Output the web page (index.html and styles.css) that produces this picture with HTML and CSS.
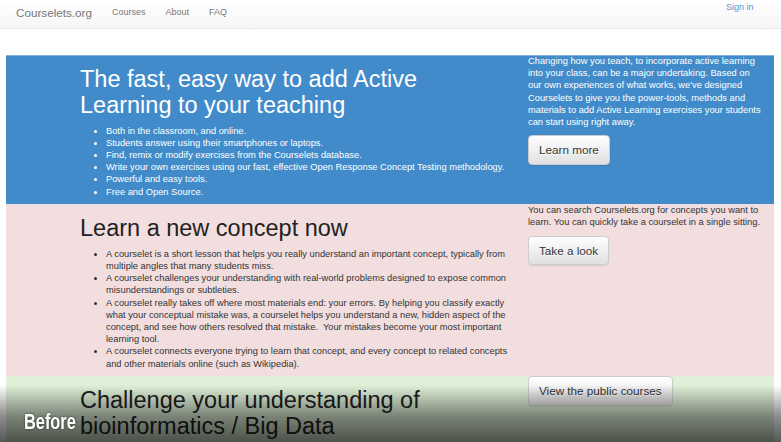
FILE: index.html
```html
<!DOCTYPE html>
<html lang="en">
<head>
<meta charset="utf-8">
<title>Courselets.org</title>
<link rel="stylesheet" href="styles.css">
</head>
<body>
<header class="navbar">
  <a class="brand" href="#">Courselets.org</a>
  <nav class="nav-links">
    <a href="#">Courses</a>
    <a href="#">About</a>
    <a href="#">FAQ</a>
  </nav>
  <a class="signin" href="#">Sign in</a>
</header>
<main class="page">
  <section class="band band-blue">
    <div class="col-main">
      <h1>The fast, easy way to add Active Learning to your teaching</h1>
      <ul>
        <li>Both in the classroom, and online.</li>
        <li>Students answer using their smartphones or laptops.</li>
        <li>Find, remix or modify exercises from the Courselets database.</li>
        <li>Write your own exercises using our fast, effective Open Response Concept Testing methodology.</li>
        <li>Powerful and easy tools.</li>
        <li>Free and Open Source.</li>
      </ul>
    </div>
    <div class="col-side">
      <p>Changing how you teach, to incorporate active learning into your class, can be a major undertaking. Based on our own experiences of what works, we've designed Courselets to give you the power-tools, methods and materials to add Active Learning exercises your students can start using right away.</p>
      <a class="btn" href="#">Learn more</a>
    </div>
  </section>
  <section class="band band-pink">
    <div class="col-main">
      <h1>Learn a new concept now</h1>
      <ul>
        <li>A courselet is a short lesson that helps you really understand an important concept, typically from multiple angles that many students miss.</li>
        <li>A courselet challenges your understanding with real-world problems designed to expose common misunderstandings or subtleties.</li>
        <li>A courselet really takes off where most materials end: your errors. By helping you classify exactly what your conceptual mistake was, a courselet helps you understand a new, hidden aspect of the concept, and see how others resolved that mistake.&nbsp; Your mistakes become your most important learning tool.</li>
        <li>A courselet connects everyone trying to learn that concept, and every concept to related concepts and other materials online (such as Wikipedia).</li>
      </ul>
    </div>
    <div class="col-side">
      <p>You can search Courselets.org for concepts you want to learn. You can quickly take a courselet in a single sitting.</p>
      <a class="btn" href="#">Take a look</a>
    </div>
  </section>
  <section class="band band-green">
    <div class="col-main">
      <h1>Challenge your understanding of bioinformatics / Big Data</h1>
    </div>
    <div class="col-side">
      <a class="btn" href="#">View the public courses</a>
    </div>
  </section>
</main>
<div class="fade"><span class="before-label">Before</span></div>
</body>
</html>
```
FILE: styles.css
```css
html, body {
  margin: 0;
  height: 100%;
  overflow: hidden;
}
body {
  font-family: "Liberation Sans", Arial, sans-serif;
  font-size: 9.3px;
  line-height: 12.2px;
  color: #333;
  background: #fff;
}
a { text-decoration: none; }

.navbar {
  display: flex;
  align-items: flex-start;
  height: 28px;
  border-bottom: 1px solid #e7e7e7;
  background: linear-gradient(to bottom, #fff 0, #f6f6f6 100%);
}
.brand {
  font-size: 11.7px;
  line-height: 16px;
  padding: 4.7px 10px 0 16px;
  color: #777;
}
.nav-links { display: flex; }
.nav-links a {
  font-size: 9px;
  line-height: 12px;
  padding: 5.7px 10px 0;
  color: #777;
}
.signin {
  margin-left: auto;
  margin-right: 27.5px;
  font-size: 9px;
  line-height: 12px;
  padding-top: 1.3px;
  color: #5b95d0;
}

.page {
  padding: 26px 7px 0 6px;
}
.band {
  display: grid;
  grid-template-columns: 431px 236px;
  column-gap: 17px;
  padding: 0 10px 0 74px;
}
.band-blue {
  background: #428bca;
  color: #fff;
  box-shadow: inset 0 1px 0 rgba(255, 255, 255, 0.35);
}
.band-pink { background: #f2dede; }
.band-green {
  background: #dff0d8;
  min-height: 200px;
}
.band h1 {
  font-size: 23.5px;
  line-height: 26px;
  font-weight: normal;
  margin: 11px 0 6.5px;
  color: #222;
}
.band-blue h1 { color: #fff; }
.band ul {
  margin: 0 0 6.5px;
  padding-left: 26px;
}
.col-side p { margin: 0 0 7px; }

.btn {
  display: inline-block;
  font-size: 11.7px;
  line-height: 15.6px;
  padding: 6px 10px;
  color: #333;
  border: 1px solid #ccc;
  border-radius: 4px;
  background: linear-gradient(to bottom, #fff 0, #e0e0e0 100%);
  text-shadow: 0 1px 0 #fff;
  box-shadow: 0 1px 1px rgba(0, 0, 0, 0.08);
}

.fade {
  position: fixed;
  left: 0;
  right: 0;
  bottom: 0;
  height: 57px;
  background: linear-gradient(to bottom, rgba(0, 0, 0, 0) 0, rgba(0, 0, 0, 0.45) 55%, rgba(0, 0, 0, 0.66) 100%);
  pointer-events: none;
}
.before-label {
  position: absolute;
  left: 24px;
  top: 25px;
  font-family: "Liberation Sans", Arial, sans-serif;
  font-weight: bold;
  font-size: 22.7px;
  line-height: 22.7px;
  color: #fff;
  transform: scaleX(0.72);
  transform-origin: left center;
  text-shadow: 0 0 3px rgba(0, 0, 0, 0.6);
}
```
